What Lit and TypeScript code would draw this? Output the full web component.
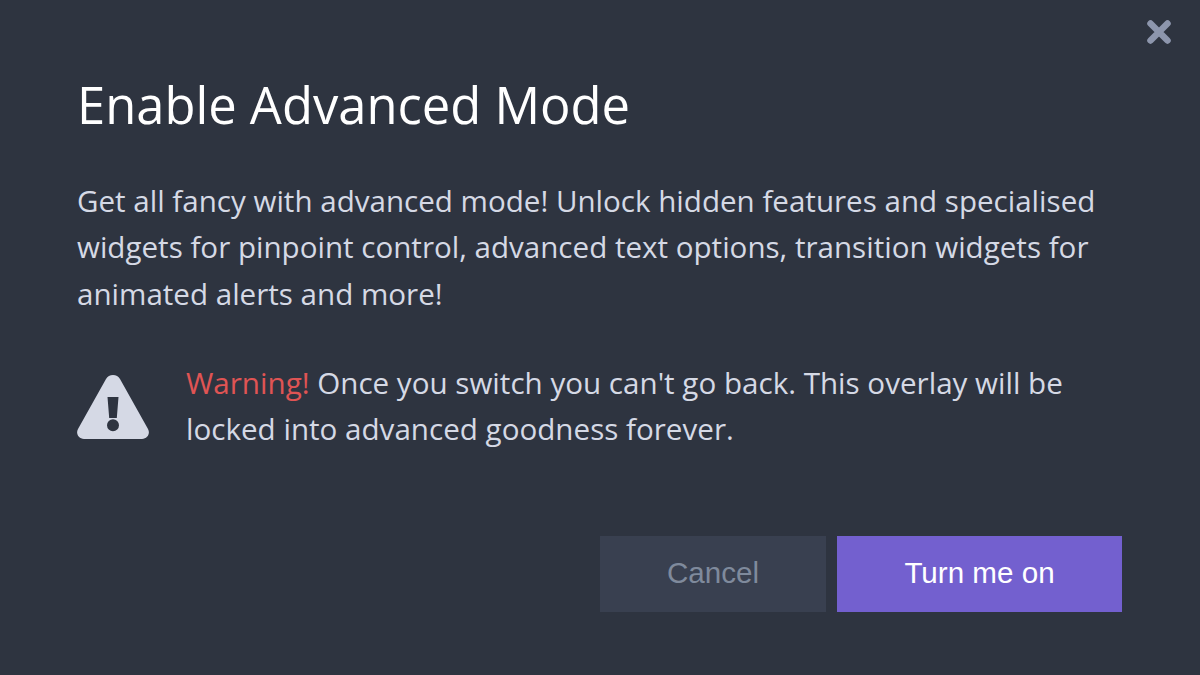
import { LitElement, html, css } from "lit";
import { customElement } from "lit/decorators.js";

@customElement("app-root")
export class AppRoot extends LitElement {
  static styles = css`
    :host { display: block; width: 1200px; height: 675px; background: #2e3440; font-family: "Open Sans", sans-serif; overflow: hidden; }
    .wrap { position: relative; box-sizing: border-box; width: 1200px; height: 675px; padding: 76px 78px 0 77px; display: flex; flex-direction: column; }
    .close { position: absolute; top: 20px; right: 29px; width: 24px; height: 24px; }
    h1 { margin: 0; font-size: 50.7px; font-weight: 400; line-height: 58px; color: #fff; }
    .lead { margin: 44px 0 0; font-size: 29.57px; line-height: 46.3px; color: #d5d9e5; }
    .warn { display: flex; gap: 37px; align-items: center; margin-top: 43px; }
    .warn svg { width: 72px; height: 64px; flex: none; position: relative; top: 1px; }
    .warn p { margin: 0; font-size: 29.6px; line-height: 46.3px; color: #d5d9e5; }
    .red { color: #e05454; }
    .btns { display: flex; justify-content: flex-end; gap: 11px; margin-top: 83.5px; }
    button { border: 0; height: 76px; font-family: "Liberation Sans", Arial, sans-serif; font-size: 29.6px; padding: 0 0 2px; }
    .cancel { width: 226px; background: #394050; color: #7f8a9c; }
    .on { width: 285px; background: #7360cf; color: #fff; }
  `;
  render() {
    return html`<div class="wrap">
      <svg class="close" viewBox="0 0 24 24"><path d="M3.500 3.500 L20.500 20.500 M20.500 3.500 L3.500 20.500" stroke="#8d96ad" stroke-width="6.500" stroke-linecap="round" fill="none"/></svg>
      <h1>Enable Advanced Mode</h1>
      <p class="lead">Get all fancy with advanced mode! Unlock hidden features and specialised widgets for pinpoint control, advanced text options, transition widgets for animated alerts and more!</p>
      <div class="warn">
        <svg viewBox="0 0 72 64"><path fill-rule="evenodd" fill="#d5d9e5" d="M36 0c3 0 5.500 1.600 7 4l28 50c2.500 4.500-.5 10-6 10H7c-5.500 0-8.500-5.500-6-10L29 4c1.500-2.400 4-4 7-4zM30.500 22l1.700 21h7.600l1.700-21zM36 44.200a6 6 0 1 0 0 12a6 6 0 1 0 0-12z"/></svg>
        <p><span class="red">Warning!</span> Once you switch you can't go back. This overlay will be locked into advanced goodness forever.</p>
      </div>
      <div class="btns"><button class="cancel">Cancel</button><button class="on">Turn me on</button></div>
    </div>`;
  }
}
